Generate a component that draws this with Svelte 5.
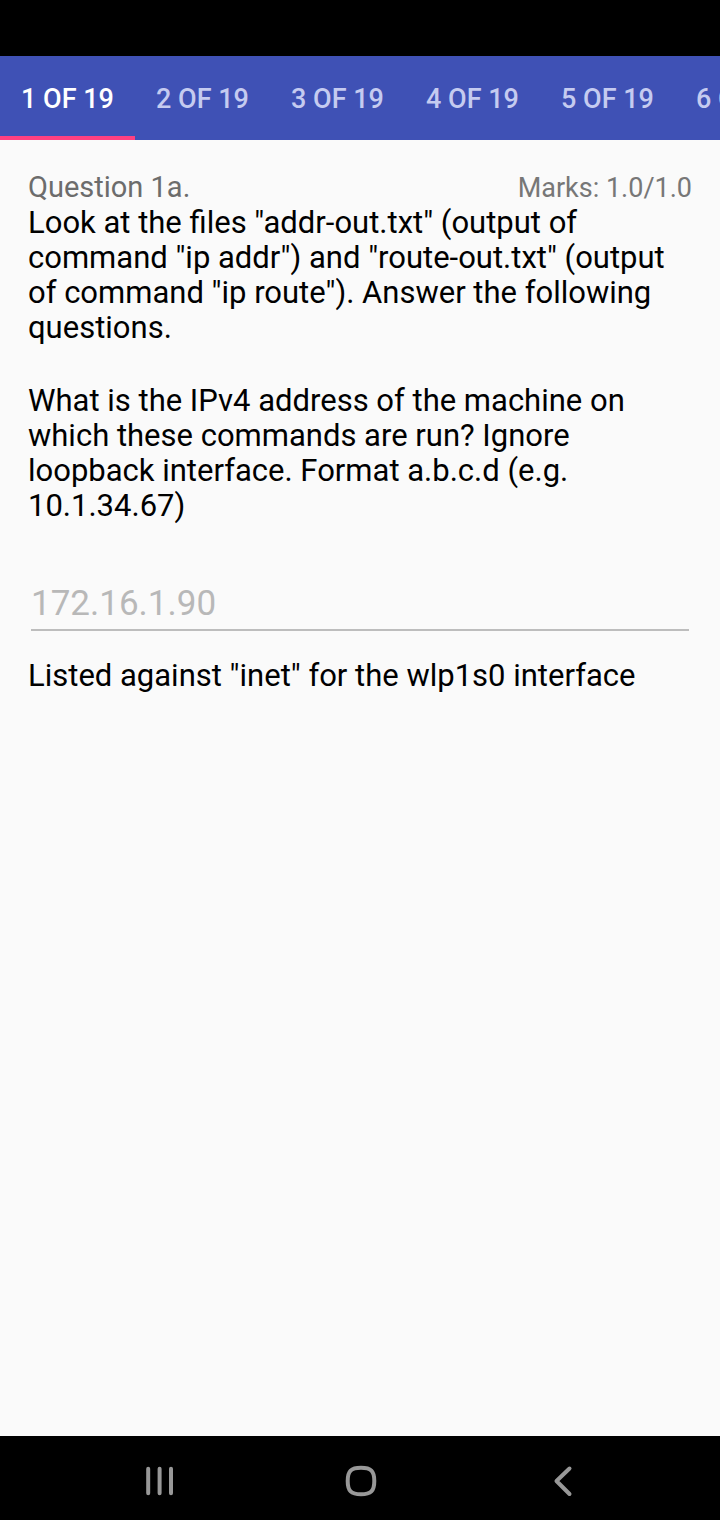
<script>
  const total = 19;
  const tabs = Array.from({ length: total }, (_, i) => i + 1);
  let current = $state(1);
</script>

<div class="app">
  <div class="status"></div>
  <nav class="tabs" aria-label="Questions">
    {#each tabs as n}
      <button class="tab" class:active={n === current} onclick={() => (current = n)}>{n} OF {total}</button>
    {/each}
  </nav>
  <main class="content">
    <header class="head">
      <label class="number" for="answer">Question 1a.</label>
      <span class="marks">Marks: 1.0/1.0</span>
    </header>
    <p>Look at the files "addr-out.txt" (output of command "ip addr") and "route-out.txt" (output of command "ip route"). Answer the following questions.</p>
    <p class="prompt">What is the IPv4 address of the machine on which these commands are run? Ignore loopback interface. Format a.b.c.d (e.g. 10.1.34.67)</p>
    <input id="answer" class="answer" type="text" value="172.16.1.90" disabled />
    <p>Listed against "inet" for the wlp1s0 interface</p>
  </main>
  <footer class="navbar">
    <button aria-label="Recent apps">
      <svg width="40" height="40" viewBox="0 0 40 40"><path d="M10.200 7.700v24.600M21.600 7.700v24.600M33 7.700v24.600" /></svg>
    </button>
    <button aria-label="Home">
      <svg width="40" height="40" viewBox="0 0 40 40"><path d="M21 6.800C31 6.800 34.300 10 34.300 20S31 33.300 21 33.300 7.700 30 7.700 20 11 6.800 21 6.800Z" /></svg>
    </button>
    <button aria-label="Back">
      <svg class="back" width="40" height="40" viewBox="0 0 40 40"><path d="M27.500 7.500L14.500 20l13 13" /></svg>
    </button>
  </footer>
</div>

<style>
  :global(body) {
    margin: 0;
    background: #fafafa;
  }
  .app {
    display: flex;
    flex-direction: column;
    min-height: 100vh;
    font-family: Roboto, sans-serif;
    color: #000;
  }
  button {
    border: 0;
    padding: 0;
    background: none;
    font-family: inherit;
    cursor: pointer;
  }
  .status {
    height: 56px;
    background: #000;
  }
  .tabs {
    display: flex;
    height: 84px;
    overflow-x: auto;
    scrollbar-width: none;
    background: #3f51b5;
  }
  .tab {
    flex: 0 0 135px;
    box-sizing: border-box;
    padding-top: 6px;
    border-bottom: 4px solid transparent;
    font-size: 27px;
    font-weight: 500;
    color: #c5cbf0;
    white-space: nowrap;
  }
  .tab.active {
    border-bottom-color: #ff4081;
    color: #fff;
  }
  .content {
    flex: 1;
    padding: 28px;
  }
  .head {
    display: flex;
    justify-content: space-between;
    align-items: baseline;
    line-height: 39px;
    height: 37px;
  }
  .number {
    font-size: 29px;
    color: #6c6c6c;
  }
  .marks {
    font-size: 27px;
    color: #777;
  }
  p {
    margin: 0;
    font-size: 31px;
    line-height: 35px;
  }
  .prompt {
    margin-top: 38px;
  }
  .answer {
    display: block;
    box-sizing: border-box;
    width: calc(100% - 6px);
    height: 56px;
    margin: 52px 3px 27px;
    padding: 2px 0 0;
    border: 0;
    border-bottom: 2px solid #bdbdbd;
    background: none;
    font-family: inherit;
    font-size: 35px;
    color: #b8b8b8;
  }
  .navbar {
    display: flex;
    align-items: center;
    box-sizing: border-box;
    height: 84px;
    padding: 6px 8% 0;
    background: #000;
  }
  .navbar button {
    display: flex;
    flex: 1;
    justify-content: center;
  }
  svg {
    fill: none;
    stroke: #989898;
    stroke-width: 4;
    stroke-linecap: round;
    stroke-linejoin: round;
  }
</style>
